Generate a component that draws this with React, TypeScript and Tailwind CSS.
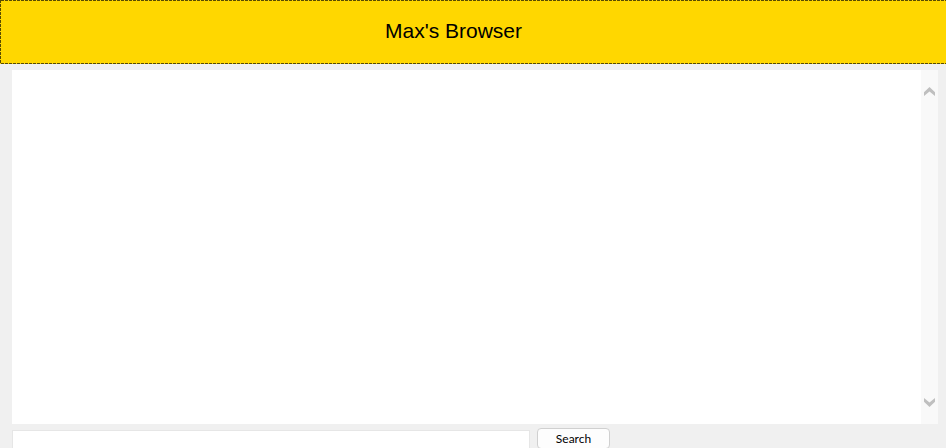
import type { FormEvent } from "react";

function Arrow({ direction }: { direction: "up" | "down" }) {
  return (
    <svg
      width="11"
      height="9"
      viewBox="0 0 11 9"
      className={direction === "down" ? "rotate-180" : ""}
      aria-hidden="true"
    >
      <path d="M0 5.2 L5.5 0 L11 5.2 V9 L5.5 4.6 L0 9 Z" fill="#bfbfbf" />
    </svg>
  );
}

function Header() {
  return (
    <header className="flex h-16 shrink-0 bg-[#ffd700] text-[#594b00]">
      <div className="w-px bg-[repeating-linear-gradient(180deg,currentColor_0_3px,transparent_3px_4px)]" />
      <div className="flex min-w-0 flex-1 flex-col">
        <div className="h-px bg-[repeating-linear-gradient(90deg,currentColor_0_3px,transparent_3px_4px)]" />
        <h1 className="flex-1 pt-4 pr-10 text-center font-['Liberation_Sans',Arial,sans-serif] text-[21px] leading-7 text-black">
          Max's Browser
        </h1>
        <div className="h-px bg-[repeating-linear-gradient(90deg,currentColor_0_3px,transparent_3px_4px)]" />
      </div>
    </header>
  );
}

function PageView() {
  return (
    <main className="mt-1.5 mr-2 ml-3 flex min-h-0 flex-1 bg-white">
      <div className="flex-1" />
      <div className="flex w-[17px] flex-col items-center justify-between bg-[#f9f9f9] py-[17px]">
        <button type="button" aria-label="Scroll up" className="flex">
          <Arrow direction="up" />
        </button>
        <button type="button" aria-label="Scroll down" className="flex">
          <Arrow direction="down" />
        </button>
      </div>
    </main>
  );
}

function SearchBar() {
  const submit = (event: FormEvent) => event.preventDefault();
  return (
    <form onSubmit={submit} className="flex h-6 shrink-0 items-start gap-[7px] pt-1 pl-3">
      <input
        type="text"
        aria-label="Address"
        className="mt-0.5 h-6 w-[518px] border border-[#e6e6e6] bg-white px-1 text-xs outline-none"
      />
      <button
        type="submit"
        className="h-[21px] w-[73px] rounded border border-[#d0d0d0] bg-[#fdfdfd] font-['Lato','Open_Sans',sans-serif] text-xs leading-4 text-black"
      >
        Search
      </button>
    </form>
  );
}

export default function App() {
  return (
    <div className="flex h-screen flex-col overflow-hidden bg-[#f0f0f0]">
      <Header />
      <PageView />
      <SearchBar />
    </div>
  );
}
